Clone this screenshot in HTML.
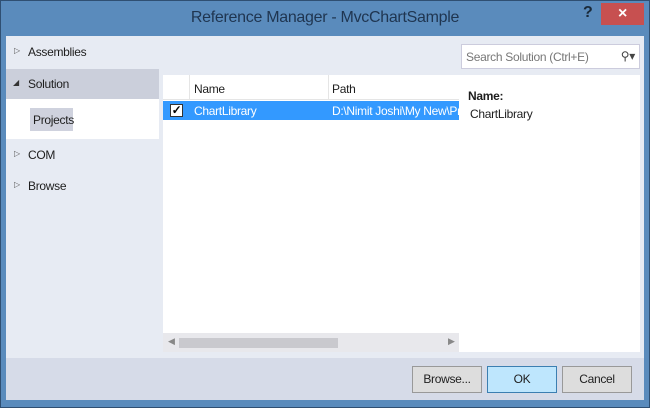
<!DOCTYPE html>
<html><head><style>
*{margin:0;padding:0;box-sizing:border-box}
body{width:650px;height:408px;overflow:hidden;font-family:"Liberation Sans",sans-serif;font-size:12px;color:#1e1e1e;background:#5a8bbc;position:relative;letter-spacing:-0.3px}
.a{position:absolute}
.outer{left:0;top:0;width:650px;height:408px;border:1px solid #2f4f72}
</style></head><body>
<div class="a outer"></div>
<div class="a" style="left:0;top:9px;width:650px;text-align:center;font-size:16px;color:#1f3550;">Reference Manager - MvcChartSample</div>
<div class="a" style="left:583px;top:4px;font-size:16px;font-weight:bold;color:#1a2a3a">?</div>
<div class="a" style="left:601px;top:3px;width:43px;height:22px;background:#c75050;color:#fff;text-align:center;font-size:16px;font-weight:bold;line-height:22px">×</div>
<div class="a" style="left:6px;top:36px;width:638px;height:364px;background:#e7ebf3"></div>
<div class="a" style="left:14px;top:46px;font-size:8px;color:#555">▷</div>
<div class="a" style="left:28px;top:45px">Assemblies</div>
<div class="a" style="left:6px;top:69px;width:153px;height:30px;background:#cbcfdb"></div>
<div class="a" style="left:13px;top:78px;font-size:8px;color:#333">◢</div>
<div class="a" style="left:28px;top:77px">Solution</div>
<div class="a" style="left:6px;top:99px;width:153px;height:40px;background:#fff"></div>
<div class="a" style="left:30px;top:108px;width:43px;height:23px;background:#cfd2de;padding:5px 0 0 3px">Projects</div>
<div class="a" style="left:14px;top:149px;font-size:8px;color:#555">▷</div>
<div class="a" style="left:28px;top:148px">COM</div>
<div class="a" style="left:14px;top:180px;font-size:8px;color:#555">▷</div>
<div class="a" style="left:28px;top:179px">Browse</div>
<div class="a" style="left:461px;top:44px;width:179px;height:25px;background:#fff;border:1px solid #ccd;color:#777;padding:5px 0 0 4px">Search Solution (Ctrl+E)<span style="position:absolute;right:4px;top:4px;color:#444">⚲▾</span></div>
<div class="a" style="left:163px;top:75px;width:296px;height:277px;background:#fff"></div>
<div class="a" style="left:163px;top:75px;width:296px;height:25px;background:#fff;border-bottom:1px solid #e5e5e5"></div>
<div class="a" style="left:189px;top:75px;width:1px;height:25px;background:#e5e5e5"></div>
<div class="a" style="left:328px;top:75px;width:1px;height:25px;background:#e5e5e5"></div>
<div class="a" style="left:194px;top:82px">Name</div>
<div class="a" style="left:332px;top:82px">Path</div>
<div class="a" style="left:163px;top:101px;width:296px;height:19px;background:#3399ff;color:#fff;overflow:hidden;white-space:nowrap"><span style="position:absolute;left:31px;top:3px">ChartLibrary</span><span style="position:absolute;left:169px;top:3px">D:\Nimit Joshi\My New\Pr</span></div>
<div class="a" style="left:170px;top:104px;width:13px;height:13px;background:#fff;border:1px solid #333;font-size:12px;line-height:11px;text-align:center;color:#000;font-weight:bold">✓</div>
<div class="a" style="left:163px;top:333px;width:296px;height:19px;background:#e8e8ec"></div>
<div class="a" style="left:179px;top:338px;width:159px;height:10px;background:#c9c9ce"></div>
<div class="a" style="left:168px;top:336px;font-size:9px;color:#888">◀</div>
<div class="a" style="left:448px;top:336px;font-size:9px;color:#888">▶</div>
<div class="a" style="left:459px;top:75px;width:181px;height:277px;background:#fff"></div>
<div class="a" style="left:468px;top:89px;font-weight:bold">Name:</div>
<div class="a" style="left:470px;top:107px">ChartLibrary</div>
<div class="a" style="left:6px;top:358px;width:638px;height:42px;background:#d6dbe8"></div>
<div class="a" style="left:412px;top:366px;width:70px;height:27px;background:#dddddd;border:1px solid #999;text-align:center;line-height:25px">Browse...</div>
<div class="a" style="left:487px;top:366px;width:70px;height:27px;background:#bee6fd;border:1px solid #3c7fb1;text-align:center;line-height:25px">OK</div>
<div class="a" style="left:562px;top:366px;width:70px;height:27px;background:#dddddd;border:1px solid #999;text-align:center;line-height:25px">Cancel</div>
</body></html>
